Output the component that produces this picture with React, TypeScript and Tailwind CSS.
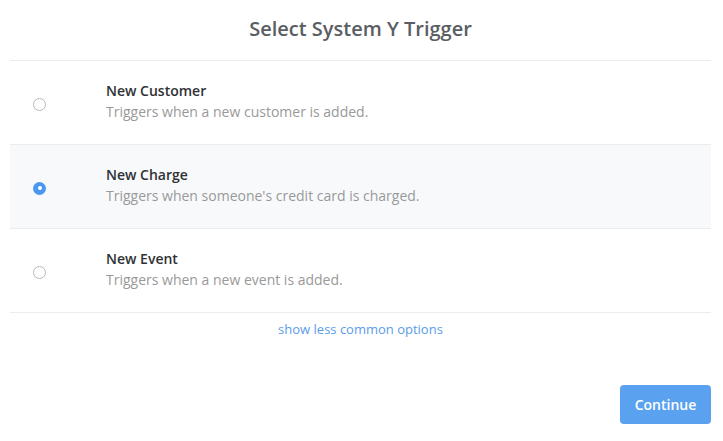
import { FC, useState } from "react";

type Trigger = {
  key: string;
  title: string;
  description: string;
};

const triggers: Trigger[] = [
  { key: "customer", title: "New Customer", description: "Triggers when a new customer is added." },
  { key: "charge", title: "New Charge", description: "Triggers when someone's credit card is charged." },
  { key: "event", title: "New Event", description: "Triggers when a new event is added." },
];

const App: FC = () => {
  const [selected, setSelected] = useState("charge");

  return (
    <div className="min-h-screen w-[721px] bg-white px-[10px] font-['Open_Sans',sans-serif]">
      <div className="flex h-[61px] items-center justify-center border-b border-[#ececec] pb-[2px]">
        <h1 className="text-[20px] font-semibold text-[#5a5e63]">Select System Y Trigger</h1>
      </div>

      {triggers.map((t) => {
        const active = selected === t.key;
        return (
          <div
            key={t.key}
            onClick={() => setSelected(t.key)}
            className={`flex h-[84px] cursor-pointer items-center border-b border-[#ececec] pl-[23px] ${
              active ? "bg-[#f8f9fb]" : "bg-white"
            }`}
          >
            {/* radio */}
            <div className="mt-[3px] flex w-[13px] shrink-0 justify-center">
              {active ? (
                <span className="flex h-[13px] w-[13px] items-center justify-center rounded-full bg-[#4a98f0]">
                  <span className="h-[4px] w-[4px] rounded-full bg-white" />
                </span>
              ) : (
                <span className="h-[13px] w-[13px] rounded-full border border-[#b9b9b9] bg-white" />
              )}
            </div>
            <div className="ml-[60px] flex flex-col pb-[3px]">
              <div className="text-[14px] leading-[21px] font-semibold text-[#2f3135]">{t.title}</div>
              <div className="text-[14px] leading-[21px] text-[#999999]">{t.description}</div>
            </div>
          </div>
        );
      })}

      <div className="flex justify-center pt-[7px]">
        <a href="#" className="text-[13px] leading-[18px] text-[#5b9cea]">
          show less common options
        </a>
      </div>

      <div className="mt-[47px] flex justify-end">
        <button
          type="submit"
          className="h-[39px] w-[91px] rounded-[4px] bg-[#5aa2ef] text-[14px] font-semibold text-white"
        >
          Continue
        </button>
      </div>
    </div>
  );
};

export default App;
